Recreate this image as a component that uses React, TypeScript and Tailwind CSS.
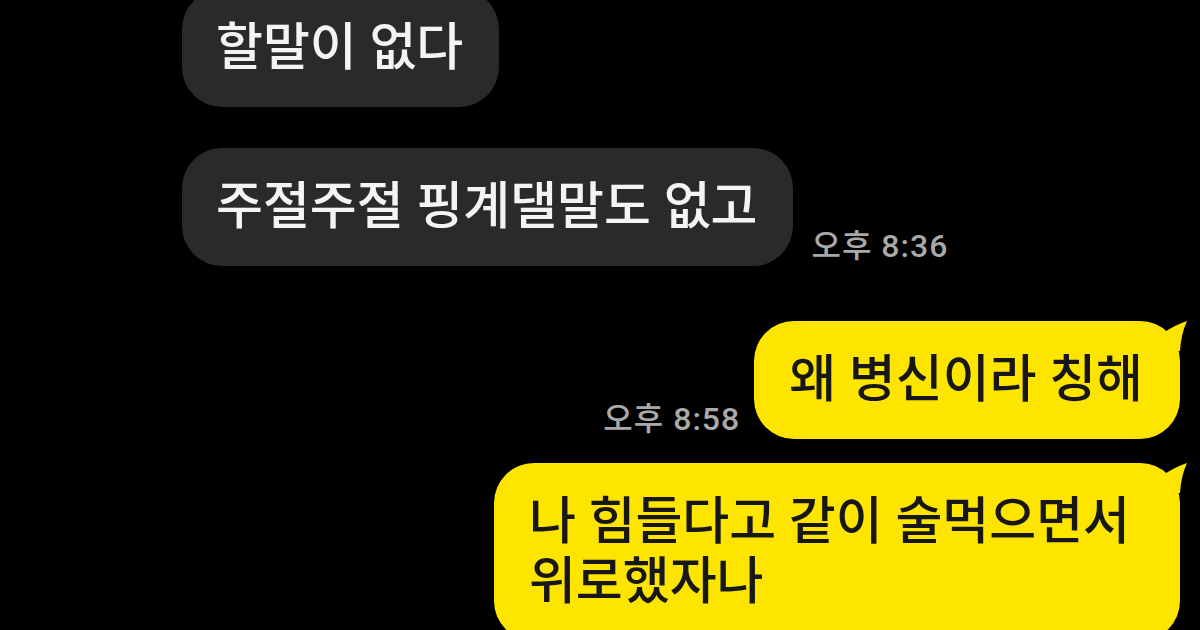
import React from "react";

const font = "font-['Roboto','Noto_Sans_CJK_KR',sans-serif]";

const GrayBubble = ({ children }: { children: React.ReactNode }) => (
  <div className="rounded-[40px] bg-[#2a2a2a] pl-[34px] pr-[36px] py-[29px] text-[51px] leading-[60px] text-[#f4f4f4] whitespace-nowrap">
    {children}
  </div>
);

// yellow bubble with the little ear on its top-right corner
const YellowBubble = ({
  children,
  className = "pl-[35px] pr-[37px]",
}: {
  children: React.ReactNode;
  className?: string;
}) => (
  <div className={`relative rounded-[40px] bg-[#fde500] py-[29px] text-[51px] leading-[60px] text-[#171717] whitespace-nowrap ${className}`}>
    {children}
    <svg
      className="absolute top-0 -right-[8px]"
      width="40"
      height="40"
      viewBox="0 0 40 40"
    >
      <path d="M15 12 Q27 4 39 0 Q33 13 32 30 L14 30 Z" fill="#fde500" />
    </svg>
  </div>
);

const Time = ({ children }: { children: React.ReactNode }) => (
  <span className="text-[32px] leading-none tracking-[1px] text-[#a9a9a9] whitespace-nowrap mb-[4px]">
    {children}
  </span>
);

export default function App() {
  return (
    <div className={`w-[1200px] h-[630px] overflow-hidden bg-black ${font} font-medium`}>
      <div className="flex flex-col">
        <div className="flex pl-[182px] -mt-[11px]">
          <GrayBubble>할말이 없다</GrayBubble>
        </div>

        <div className="flex items-end gap-[18px] pl-[182px] mt-[41px]">
          <GrayBubble>주절주절 핑계댈말도 없고</GrayBubble>
          <Time>오후 8:36</Time>
        </div>

        <div className="flex items-end justify-end gap-[14px] pr-[20px] mt-[55px]">
          <Time>오후 8:58</Time>
          <YellowBubble>왜 병신이라 칭해</YellowBubble>
        </div>

        <div className="flex justify-end pr-[20px] mt-[24px]">
          <YellowBubble className="pl-[35px] pr-[50px]">
            나 힘들다고 같이 술먹으면서
            <br />
            위로했자나
          </YellowBubble>
        </div>
      </div>
    </div>
  );
}
